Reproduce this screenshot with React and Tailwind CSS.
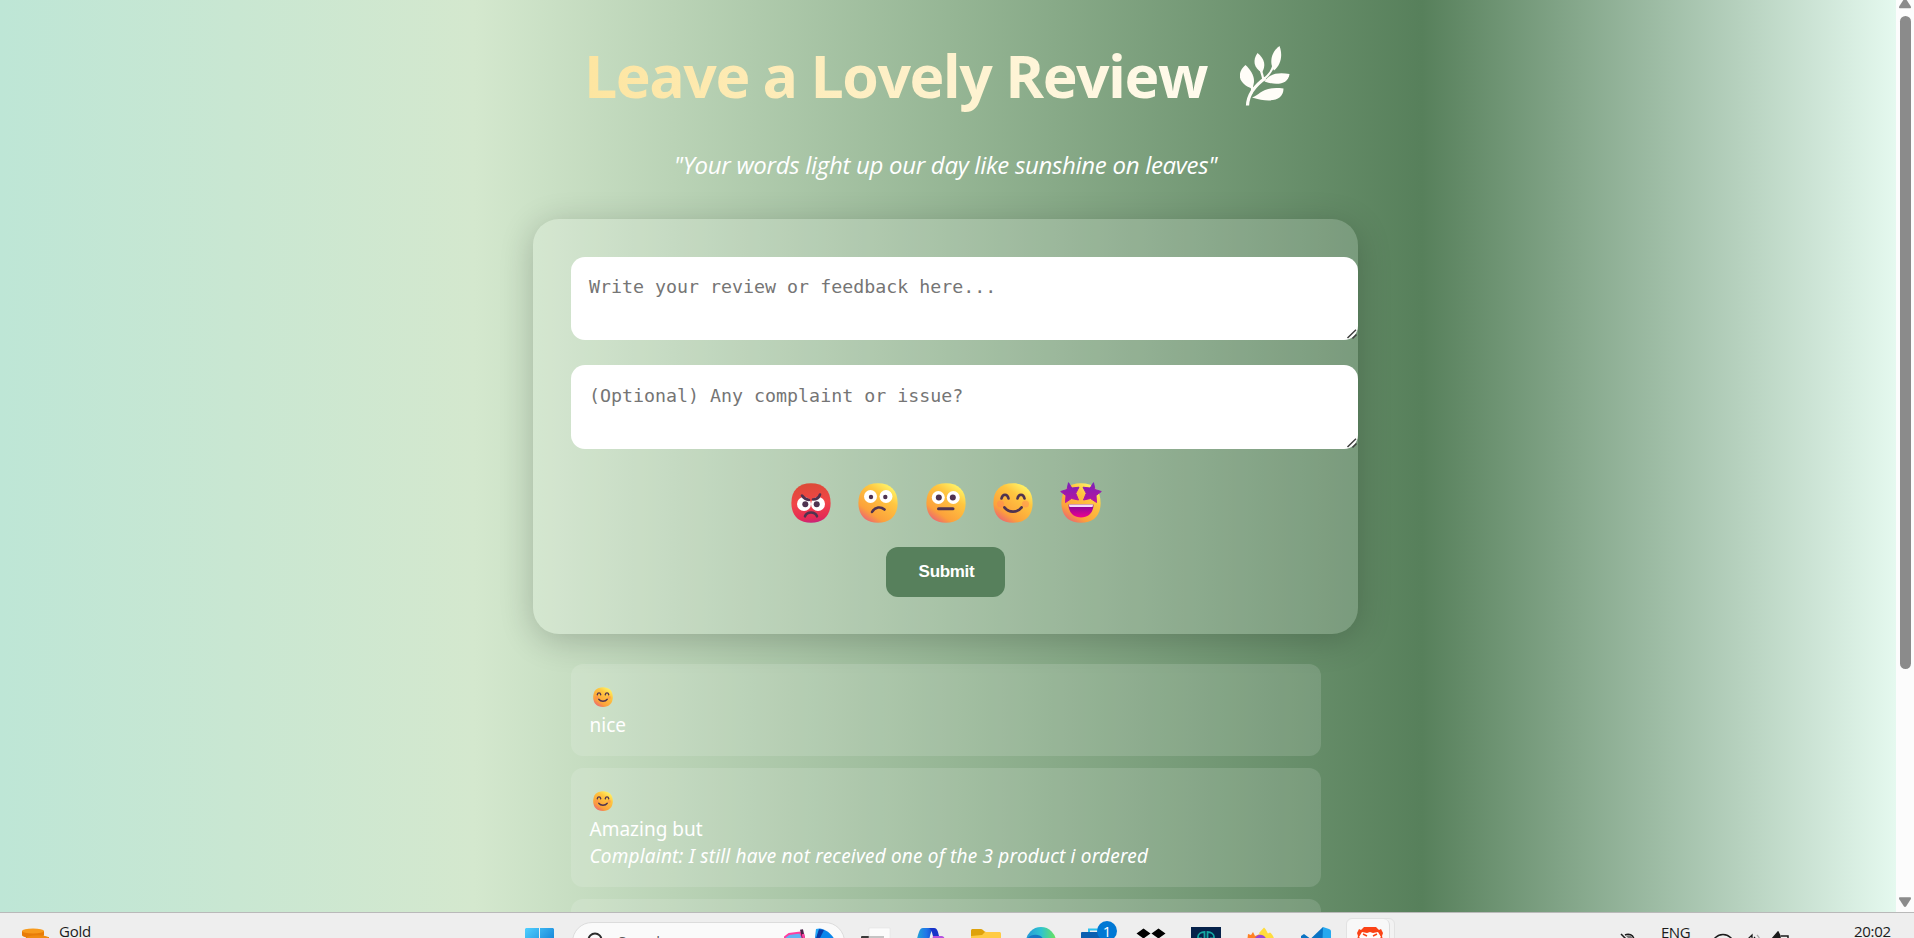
import React from "react";

const SANS = "font-['Open_Sans','Noto_Sans',sans-serif]";

function Defs() {
  return (
    <svg className="absolute h-0 w-0" aria-hidden="true">
      <defs>
        <linearGradient id="face" x1="0.85" y1="0.1" x2="0.25" y2="0.95">
          <stop offset="0" stopColor="#fff266" />
          <stop offset="0.3" stopColor="#ffc640" />
          <stop offset="0.8" stopColor="#fca13b" />
          <stop offset="1" stopColor="#ee6f6a" />
        </linearGradient>
        <linearGradient id="angry" x1="0.4" y1="0" x2="0.5" y2="1">
          <stop offset="0" stopColor="#dc4b37" />
          <stop offset="0.5" stopColor="#f14547" />
          <stop offset="0.88" stopColor="#e52a55" />
          <stop offset="1" stopColor="#c8247c" />
        </linearGradient>
        <linearGradient id="star" x1="0" y1="0" x2="0" y2="1">
          <stop offset="0" stopColor="#7d20b8" />
          <stop offset="1" stopColor="#b9149f" />
        </linearGradient>
        <linearGradient id="mouth" x1="0" y1="0" x2="0" y2="1">
          <stop offset="0" stopColor="#7b0a9c" />
          <stop offset="1" stopColor="#ef0090" />
        </linearGradient>
        <linearGradient id="win" x1="0" y1="0" x2="1" y2="1">
          <stop offset="0" stopColor="#4fd0ff" />
          <stop offset="1" stopColor="#0067c8" />
        </linearGradient>
        <linearGradient id="edge" x1="0" y1="0" x2="1" y2="0">
          <stop offset="0" stopColor="#2398d8" />
          <stop offset="0.5" stopColor="#2fc3d0" />
          <stop offset="1" stopColor="#6be35a" />
        </linearGradient>
        <linearGradient id="copilot" x1="0" y1="0" x2="1" y2="0">
          <stop offset="0" stopColor="#22a5d8" />
          <stop offset="0.5" stopColor="#2176e8" />
          <stop offset="1" stopColor="#1238c8" />
        </linearGradient>
      </defs>
    </svg>
  );
}

const INK = "#4f3350";

function Face({ kind, className }) {
  const stroke = { fill: "none", stroke: INK, strokeWidth: 2.6, strokeLinecap: "round", strokeLinejoin: "round" };
  return (
    <svg viewBox="0 0 40 40" className={className}>
      <path
        d="M20 .3C32.500 .3 39.600 7.500 39.600 20S32.500 39.800 20 39.800.4 32.500.4 20 7.500.3 20 .3Z"
        fill={kind === "angry" ? "url(#angry)" : "url(#face)"}
      />
      {kind === "angry" && (
        <>
          <circle cx="13" cy="21" r="7" fill="#fff" />
          <circle cx="27" cy="21" r="7" fill="#fff" />
          <circle cx="14.300" cy="21.300" r="3" fill={INK} />
          <circle cx="25.700" cy="21.300" r="3" fill={INK} />
          <path d="M11 12.500c2 3 4 4 7 4.500M29 11.500c-1 3-4 5-7 5" {...stroke} />
          <path d="M14 33.300c2-5 10-5 12 0" {...stroke} />
        </>
      )}
      {kind === "worried" && (
        <>
          <circle cx="12.500" cy="13.500" r="6.500" fill="#fff" />
          <circle cx="28" cy="13.500" r="6.500" fill="#fff" />
          <circle cx="13" cy="14" r="2.200" fill={INK} />
          <circle cx="27.300" cy="14" r="2.200" fill={INK} />
          <path d="M14 29c3-5.500 9-5.500 12.500-2.500" {...stroke} />
        </>
      )}
      {kind === "neutral" && (
        <>
          <circle cx="12.300" cy="14.500" r="6.500" fill="#fff" />
          <circle cx="27.300" cy="14.500" r="6.500" fill="#fff" />
          <circle cx="12.800" cy="14.500" r="3" fill={INK} />
          <circle cx="26.800" cy="14.500" r="3" fill={INK} />
          <path d="M12.500 25.800h14.500" {...stroke} strokeWidth="3" />
        </>
      )}
      {kind === "smile" && (
        <>
          <circle cx="7.500" cy="21" r="3.500" fill="#ff7a5c" opacity=".4" />
          <circle cx="32.500" cy="21" r="3.500" fill="#ff7a5c" opacity=".4" />
          <path d="M8.500 15.500c1-5 6-5 7 0M24.500 15.500c1-5 6-5 7 0" {...stroke} />
          <path d="M11.500 24.500c4 5.500 13 5.500 17 0" {...stroke} strokeWidth="2.800" />
        </>
      )}
      {kind === "stars" && (
        <>
          <path
            d="M7.500-.3L10.800 5 18 4.200 14.800 10.300 17.500 17 10.500 15.500 4.500 19.500 5 12.500-.3 8.500 6 6.500Z"
            fill="url(#star)"
            stroke="url(#star)"
            strokeLinejoin="round"
          />
          <path
            d="M32.500-.3L29.200 5 22 4.200 25.200 10.300 22.500 17 29.500 15.500 35.500 19.500 35 12.500 40.300 8.500 34 6.500Z"
            fill="url(#star)"
            stroke="url(#star)"
            strokeLinejoin="round"
          />
          <path d="M7.500 21.500h25c0 8-5 13-12.500 13S7.500 29.500 7.500 21.500Z" fill="url(#mouth)" />
          <path d="M7.800 21.500h24.400l-.7 2.500h-23Z" fill="#f3dcf7" />
        </>
      )}
    </svg>
  );
}

function Sprig() {
  return (
    <svg viewBox="0 0 50 60" className="h-[60px] w-[50px]" fill="#fffdf8">
      <path d="M7.500 59.500C8 47 17 38 25.500 32" fill="none" stroke="#fffdf8" strokeWidth="3.200" />
      <path d="M24 33C30 28 32 25 33.500 19M11.500 47C13 43 12 40 10.500 36M23.500 35C23 30 21.500 26 20 22" fill="none" stroke="#fffdf8" strokeWidth="2.200" />
      <path d="M39.500 0C43 9 41 19 34 24.500 29 17 31 6 39.500 0Z" />
      <path d="M17.500 7C25 13 26 20 22 26.500 13.500 22 12.500 14 17.500 7Z" />
      <path d="M5.500 19C13 26 16.500 34 12 42.500-1.500 38-4 27 5.500 19Z" />
      <path d="M49.500 28C48.500 38 37 40 24.500 35.500 30 27 39 26.500 49.500 28Z" />
      <path d="M43.500 42.500C43.500 55 30 57 12 51.500 21 49 21 40 43.500 42.500Z" />
    </svg>
  );
}

function Field({ placeholder, className, textClass }) {
  return (
    <div className={`flex w-[787px] items-end justify-between rounded-[14px] bg-white ${className}`}>
      <p className={`self-start pl-[18px] font-['DejaVu_Sans_Mono',monospace] text-[18.300px] leading-6 whitespace-pre text-[#757575] ${textClass}`}>
        {placeholder}
      </p>
      <svg viewBox="0 0 12 10" className="mb-px h-[10px] w-3" fill="none" stroke="#3f3f3f" strokeWidth="1.500">
        <path d="M1.500 9L10 .8M6.500 9.500L10.500 5.500" />
      </svg>
    </div>
  );
}

function Review({ lines, className }) {
  return (
    <article className={`flex w-[750px] shrink-0 flex-col rounded-xl bg-white/13 pt-5 pl-[19px] font-['Noto_Sans',sans-serif] text-[19px] leading-[27px] whitespace-nowrap text-white ${className}`}>
      <div className="flex h-[28px] items-center pb-[2px] pl-[3px]">
        <Face kind="smile" className="h-5 w-5" />
      </div>
      {lines.map((l) => (
        <p key={l.text}>
          <span className={l.className}>{l.text}</span>
        </p>
      ))}
    </article>
  );
}

function Scrollbar() {
  return (
    <div className="flex w-[18px] shrink-0 flex-col items-center bg-[#fcfcfc]">
      <svg viewBox="0 0 12 9" className="h-[9px] w-3" fill="#8b8b8b">
        <path d="M6-1.500c.5 0 .8.200 1.200.8l4.500 7c.6 1 .2 1.900-.8 1.900H1.100c-1 0-1.400-.9-.8-1.900l4.500-7C5.200-1.300 5.500-1.500 6-1.500Z" />
      </svg>
      <div className="mt-[7px] h-[653px] w-[11px] rounded-full bg-[#8b8b8b]" />
      <svg viewBox="0 0 12 10" className="mt-auto mb-[5px] h-[10px] w-3" fill="#8b8b8b">
        <path d="M6 10c-.5 0-.8-.2-1.200-.8L.3 2.200C-.3 1.200.1.300 1.100.300h9.800c1 0 1.400.9.8 1.900l-4.500 7C6.800 9.800 6.500 10 6 10Z" />
      </svg>
    </div>
  );
}

const APPS = [
  <svg viewBox="0 0 30 30" className="h-[30px] w-[30px]">
    <rect x="0" y="9" width="23" height="16" rx="1" fill="#3a3a3a" />
    <path d="M8 1h21v18H8z" fill="#fbfbfb" stroke="#dedede" strokeWidth=".5" />
    <path d="M8 9h15v10H8z" fill="#c4c4c4" />
  </svg>,
  <svg viewBox="0 0 30 30" className="h-[30px] w-[30px]">
    <path d="M7 1h13c-3 0-5 3-6 8l-3 12H1C0 16 1 10 3 5c1-2.500 2-4 4-4Z" fill="url(#copilot)" />
    <path d="M13 1h5c3 0 4 3 5 8h-6c-1-3-1-6-4-8Z" fill="#1733c9" />
    <path d="M17 9h8c4 0 5 4 3 12H14Z" fill="#b452e0" />
  </svg>,
  <svg viewBox="0 0 30 30" className="h-[30px] w-[30px]">
    <path d="M0 4c0-1.500.5-2 2-2h8c2 0 3 3 5 3v6H0Z" fill="#dea20c" />
    <path d="M0 9l11-1 3-3h14c1.500 0 2 .5 2 2v20H0Z" fill="#ffcb45" />
  </svg>,
  <svg viewBox="0 0 30 30" className="h-[30px] w-[30px]">
    <circle cx="15" cy="15" r="15" fill="url(#edge)" />
    <path d="M1 12C5 6 16 6 18 14l-7 6-10-2Z" fill="#1678c4" />
  </svg>,
  <svg viewBox="0 0 30 30" className="h-[30px] w-[30px] overflow-visible">
    <path d="M8 6V2.500h10" fill="none" stroke="#2bc0ee" strokeWidth="2" />
    <rect x="0" y="5" width="28" height="22" rx="1" fill="#0a5fb0" />
    <circle cx="26" cy="4" r="10" fill="#0078d4" />
    <text x="26" y="9.500" textAnchor="middle" fontFamily="Open Sans" fontSize="15" fill="#fff">1</text>
  </svg>,
  <svg viewBox="0 0 30 30" className="h-[30px] w-[30px]" fill="#000">
    <path d="M7.500 1.500l7 5-7 5-7-5ZM22.500 1.500l7 5-7 5-7-5ZM7.500 11.500l7 5-7 5-7-5Z" />
  </svg>,
  <svg viewBox="0 0 30 30" className="h-[30px] w-[30px]">
    <rect width="30" height="30" fill="#06224a" />
    <path d="M7 20V10c0-3 3-5 6.500-5v13M23 20V10c0-3-3-5-6.500-5v13M7 11.500h4M19 11.500h4" fill="none" stroke="#13a7a3" strokeWidth="1.800" />
  </svg>,
  <svg viewBox="0 0 30 30" className="h-[30px] w-[30px]">
    <path d="M1 16l1-9 3 1 2-3 2 4c3-1 4-2 7-1 3 1 5 4 5 12Z" fill="#ff8124" />
    <path d="M13 6l5-5.500c3 3 3 5 4 6l2-1c3 2 5 6 5 14h-9Z" fill="#ffdc3d" />
    <path d="M9 11c4-5 9-4 12 2l-3 9h-8Z" fill="#9847d8" />
  </svg>,
  <svg viewBox="0 0 30 30" className="h-[30px] w-[30px]">
    <path d="M0 9l3-2 19 14v4L0 11ZM22 0v12L3 24l-3-3Z" fill="#0a74c4" />
    <path d="M22 0l6 2c1.500.6 2 1 2 3v22h-9Z" fill="#27a9f0" />
  </svg>,
];

function Taskbar() {
  return (
    <footer className={`flex h-[26px] w-full shrink-0 items-start overflow-hidden border-t border-[#b9b9b9] bg-[#eeeeee] text-[#1b1b1b] ${SANS}`}>
      <div className="flex w-[525px] shrink-0 items-start pl-[22px]">
        <svg viewBox="0 0 27 14" className="mt-[15px] h-[14px] w-[27px]">
          <path d="M0 3v4c0 4 22 4 22 0V3Z" fill="#e87c08" />
          <ellipse cx="11" cy="3" rx="11" ry="2.600" fill="#f79a1c" />
          <path d="M4 9v5h23V9Z" fill="#e87c08" />
          <ellipse cx="15.500" cy="9.500" rx="11" ry="2.200" fill="#f08b10" />
        </svg>
        <span className="mt-[8px] ml-[10px] text-[15px] leading-5 tracking-[-0.200px]">Gold</span>
      </div>
      <svg viewBox="0 0 29 29" className="mt-[15px] h-[29px] w-[29px] shrink-0" fill="url(#win)">
        <path d="M1 0h13v14H0V1ZM15 0h13l1 1v13H15ZM0 15h14v14H0ZM15 15h14v14H15Z" />
      </svg>
      <div className="mt-[9px] ml-[18px] flex h-[40px] w-[273px] shrink-0 items-start rounded-full border border-[#dcdcdc] bg-[#fafafa]">
        <svg viewBox="0 0 18 18" className="mt-[9px] ml-[14px] h-[18px] w-[18px] shrink-0" fill="none" stroke="#2c2c2c" strokeWidth="2">
          <circle cx="8" cy="8" r="6.500" />
        </svg>
        <span className="mt-[8px] ml-[13px] w-[48px] text-[15px] leading-5 text-[#5c5c5c]">Search</span>
        <svg viewBox="0 0 52 20" className="mt-[5px] ml-[118px] h-5 w-[52px] shrink-0">
          <path d="M1 9l4-3 11-1.500 4 8H0Z" fill="#62b5f4" stroke="#ff3fa0" strokeWidth="2" />
          <path d="M17.500 1.500l2.500 11" stroke="#4a2148" strokeWidth="3" />
          <path d="M19 6l1.500 8" stroke="#ff3fa0" strokeWidth="2.500" />
          <path d="M32 1l4-.5c6 1 11 5 14 10H31Z" fill="#0b86ec" />
          <path d="M34 1l6 1-4 8h-4Z" fill="#0a3ca8" />
          <path d="M32 1h3l-3 9Z" fill="#21a8f8" />
        </svg>
      </div>
      <nav className="ml-[3px] flex shrink-0">
        {APPS.map((icon, i) => (
          <div key={i} className="flex w-[55px] justify-center pt-[14px]">
            {icon}
          </div>
        ))}
        <div className="mt-[5px] ml-[3px] flex w-[49px] rounded-md border border-[#e2e2e2] bg-[#f2f2f2]">
          <div className="flex h-11 w-[43px] justify-center rounded-md border-r border-[#dcdcdc] bg-[#f8f8f8] pt-2 pl-1">
            <svg viewBox="0 0 26 30" className="h-[30px] w-[26px]">
              <path d="M7 0h12l3 3 2-1 2 4-1 3 1 4-4 12-9 5-9-5L0 13l1-4-1-3 2-4 2 1Z" fill="#fb4316" />
              <path d="M5 5l5 1 3-1 3 1 5-1 3 5-4 4 1 4-8 6-8-6 1-4-4-4Z" fill="#fff" />
              <path d="M6 7l4 2M20 7l-4 2M10 13h6" stroke="#fb4316" strokeWidth="1.500" />
            </svg>
          </div>
        </div>
      </nav>
      <div className="ml-[225px] flex shrink-0 items-start">
        <svg viewBox="0 0 16 16" className="mt-5 h-4 w-4" fill="none" stroke="#1b1b1b" strokeWidth="1.500">
          <path d="M1 1l13 13M5 2c4-2 8 0 9 4M3 6c1 4 3 4 6 4" />
          <path d="M6 3c3-2 6 0 7 3l-2 2Z" fill="#777" stroke="none" />
        </svg>
        <span className="mt-[9px] ml-[25px] w-[30px] text-[15px] leading-5 tracking-[-0.500px]">ENG</span>
        <svg viewBox="0 0 20 16" className="mt-5 ml-[22px] h-4 w-5" fill="none" stroke="#1b1b1b" strokeWidth="1.500">
          <path d="M1 6c5-6 13-6 18 0" />
        </svg>
        <svg viewBox="0 0 18 16" className="mt-5 ml-3 h-4 w-[18px]" fill="none" stroke="#1b1b1b" strokeWidth="1.300">
          <path d="M1 6h2l4-4v12M9 4c2 2 2 3 2 5" />
          <path d="M12 2c2 2 3 4 3 6" stroke="#aaa" />
        </svg>
        <svg viewBox="0 0 20 16" className="mt-[18px] ml-[8px] h-4 w-5" fill="none" stroke="#1b1b1b" strokeWidth="1.500">
          <path d="M1 8l6-7 2 4v8H1Z" fill="#1b1b1b" />
          <path d="M10 5h7v6" />
        </svg>
        <span className="mt-[8px] ml-[63px] text-[15px] leading-5 tracking-[-0.300px] whitespace-nowrap">20:02</span>
      </div>
    </footer>
  );
}

export default function App() {
  return (
    <div className={`flex h-[938px] w-[1914px] flex-col overflow-hidden ${SANS}`}>
      <Defs />
      <div className="flex h-[912px] shrink-0 overflow-hidden">
        <main className="flex w-[1896px] shrink-0 flex-col items-center overflow-hidden bg-[linear-gradient(90deg,#bee6d6_0%,#d4e8ce_25%,#96b695_50%,#57805b_75%,#e5f9ef_100%)] pr-[5px]">
          <header className="flex flex-col items-center">
            <h1 className="mt-[34px] flex h-[82px] w-[723px] items-start bg-[linear-gradient(90deg,#fde5a0,#fffefa)] bg-clip-text pr-[17px] text-[59px] leading-[82px] font-bold tracking-[-1.500px] whitespace-nowrap text-transparent">
              <span>Leave a Lovely Review</span>
              <span className="mt-3 ml-auto">
                <Sprig />
              </span>
            </h1>
            <p className="mt-[33px] h-8 text-2xl leading-8 tracking-[-0.300px] whitespace-nowrap text-white italic">
              "Your words light up our day like sunshine on leaves"
            </p>
          </header>
          <section className="mt-[38px] flex h-[415px] w-[825px] shrink-0 flex-col items-start rounded-[26px] bg-white/17 pt-[38px] pl-[38px] shadow-[0_6px_34px_rgba(0,0,0,0.2)]">
            <Field placeholder="Write your review or feedback here..." className="h-[83px]" textClass="pt-[18px]" />
            <Field placeholder="(Optional) Any complaint or issue?" className="mt-[25px] h-[84px]" textClass="pt-[19px]" />
            <div className="mt-[34px] flex gap-[27.500px] pl-[219.500px]">
              {["angry", "worried", "neutral", "smile", "stars"].map((k) => (
                <Face key={k} kind={k} className="h-10 w-10 overflow-visible" />
              ))}
            </div>
            <button className="mt-6 ml-[315px] h-[50px] w-[119px] rounded-xl bg-[#57805c] pl-[2px] font-['Liberation_Sans',Arial,sans-serif] text-[17px] font-bold tracking-[-0.300px] text-white">
              Submit
            </button>
          </section>
          <Review className="mt-[30px] h-[92px]" lines={[{ text: "nice" }]} />
          <Review
            className="mt-3 h-[119px]"
            lines={[
              { text: "Amazing but" },
              {
                text: "Complaint: I still have not received one of the 3 product i ordered",
                className: "italic tracking-[0.190px]",
              },
            ]}
          />
          <Review className="mt-3 h-[92px]" lines={[]} />
        </main>
        <Scrollbar />
      </div>
      <Taskbar />
    </div>
  );
}
